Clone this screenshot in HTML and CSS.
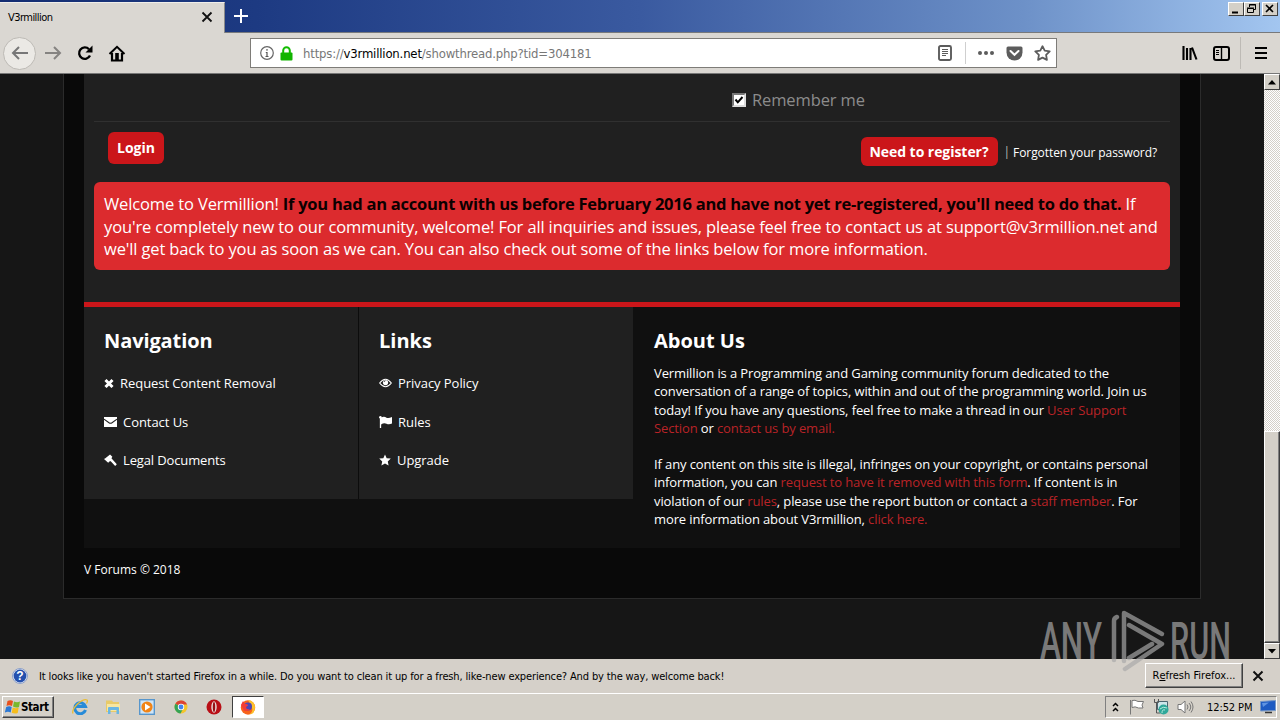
FILE: index.html
```html
<!DOCTYPE html>
<html lang="en">
<head>
<meta charset="utf-8">
<title>V3rmillion</title>
<link rel="stylesheet" href="styles.css">
</head>
<body>
<header class="tabbar">
  <div class="tab"><span class="tab-title">V3rmillion</span>
    <svg width="12" height="12" viewBox="0 0 12 12"><path d="M1.500 1.500l9 9M10.500 1.500l-9 9" stroke="#111" stroke-width="1.800"/></svg>
  </div>
  <svg class="newtab" width="16" height="16" viewBox="0 0 16 16"><path d="M8 1v14M1 8h14" stroke="#fff" stroke-width="2"/></svg>
  <div class="winbtns">
    <span class="wb"><svg width="14" height="12"><path d="M3 9.500h6" stroke="#000" stroke-width="2"/></svg></span>
    <span class="wb"><svg width="14" height="12"><path d="M4.500 4V1.500h6v5h-2M4 2h7M2.500 5.500h6v4h-6zM2 5h7" stroke="#000" fill="none"/></svg></span>
    <span class="wb wb-close"><svg width="14" height="12"><path d="M3 2l7 7M10 2L3 9" stroke="#000" stroke-width="1.600"/></svg></span>
  </div>
</header>
<nav class="toolbar">
  <span class="back"><svg width="18" height="16" viewBox="0 0 18 16"><path d="M17 8H2M8 2L2 8l6 6" stroke="#777" stroke-width="2" fill="none"/></svg></span>
  <svg class="fwd" width="18" height="16" viewBox="0 0 18 16"><path d="M1 8h14M10 2l6 6-6 6" stroke="#858381" stroke-width="2" fill="none"/></svg>
  <svg class="reload" width="16" height="16" viewBox="0 0 16 16"><path d="M13 10.500A5.700 5.700 0 1 1 12 4.200" stroke="#000" stroke-width="2.300" fill="none"/><path d="M15.500 0.500v7h-7z"/></svg>
  <svg class="home" width="18" height="17" viewBox="0 0 18 17"><path d="M1.500 9L9 1.800 16.500 9" stroke="#000" stroke-width="2" fill="none"/><path d="M4 8v7.500h10V8" stroke="#000" stroke-width="2.200" fill="none"/><path d="M7.200 8h3.600v8H7.200z"/></svg>
  <div class="urlbar">
    <svg class="info" width="14" height="14" viewBox="0 0 14 14"><circle cx="7" cy="7" r="6.300" fill="none" stroke="#666" stroke-width="1.200"/><path d="M7 3v1.700M7 6v5M5.800 6.500H7M5.500 10.500h3" stroke="#555" stroke-width="1.200"/></svg>
    <svg class="lock" width="13" height="15" viewBox="0 0 13 15"><path d="M3.200 7V4.500a3.300 3.300 0 0 1 6.600 0V7" fill="none" stroke="#12bc00" stroke-width="2"/><rect x="0.500" y="6.500" width="12" height="8" rx="1" fill="#12b400"/></svg>
    <span class="url">https://<b>v3rmillion.net</b>/showthread.php?tid=304181</span>
    <svg class="reader" width="14" height="16" viewBox="0 0 14 16"><rect x="1" y="1" width="12" height="14" rx="1.500" fill="none" stroke="#5c5c5c" stroke-width="1.900"/><path d="M4 4.500h6M4 6.500h6M4 8.500h6M4 10.500h4" stroke="#5c5c5c"/></svg>
    <i class="usep"></i>
    <svg class="dots" width="18" height="6" viewBox="0 0 18 6"><circle cx="3" cy="3" r="2"/><circle cx="9" cy="3" r="2"/><circle cx="15" cy="3" r="2"/></svg>
    <svg class="pocket" width="17" height="15" viewBox="0 0 17 15"><path d="M2 .5h13q1.500 0 1.500 1.500v4.500a8 8 0 0 1-16 0V2Q.5.500 2 .5z" fill="#5c5c5c"/><path d="M4.500 5l4 3.800 4-3.800" stroke="#fff" stroke-width="2" fill="none" stroke-linecap="round"/></svg>
    <svg class="star" width="17" height="16" viewBox="0 0 17 16"><path d="M8.500 1.200l2.200 4.500 5 .7-3.600 3.500.8 5-4.400-2.300-4.400 2.300.8-5L1.300 6.400l5-.7z" fill="none" stroke="#5c5c5c" stroke-width="1.800" stroke-linejoin="round"/></svg>
  </div>
  <svg class="lib" width="16" height="14" viewBox="0 0 16 14"><path d="M1.500 0v14M5 2v12M8.500 2v12M10 1.500L14.500 13.500" stroke="#000" stroke-width="2.100"/></svg>
  <svg class="side" width="17" height="15" viewBox="0 0 17 15"><rect x="1" y="1" width="15" height="13" rx="2" fill="none" stroke="#000" stroke-width="2"/><path d="M8.500 1v13" stroke="#000" stroke-width="1.400"/><path d="M3 4.500h3M3 6.500h3M3 8.500h3" stroke="#000"/></svg>
  <i class="tsep"></i>
  <svg class="menu" width="12" height="12" viewBox="0 0 12 12"><path d="M0 1h12M0 6h12M0 11h12" stroke="#000" stroke-width="2"/></svg>
</nav>
<main class="view">
  <div class="page">
    <div class="wrap">
      <section class="panel">
        <div class="remember"><span class="check"><svg width="10" height="10" viewBox="0 0 10 10"><path d="M1.500 4.500l2.300 2.800L8.500 2" stroke="#000" stroke-width="2" fill="none"/></svg></span><span class="rem-text">Remember me</span></div>
        <div class="actions">
          <span class="btn login">Login</span>
          <div class="right"><span class="btn register">Need to register?</span><span class="bar">|</span><span class="forgot">Forgotten your password?</span></div>
        </div>
        <div class="alert">
          <div class="ln">Welcome to Vermillion! <b>If you had an account with us before February 2016 and have not yet re-registered, you'll need to do that.</b> If</div>
          <div class="ln">you're completely new to our community, welcome! For all inquiries and issues, please feel free to contact us at support@v3rmillion.net and</div>
          <div class="ln">we'll get back to you as soon as we can. You can also check out some of the links below for more information.</div>
        </div>
      </section>
      <footer class="foot">
        <div class="col">
          <h2 class="h-nav">Navigation</h2>
          <div class="item"><svg width="10" height="10" viewBox="0 0 10 10"><path d="M1.500 2l7 7M8.500 2l-7 7" stroke="#fff" stroke-width="3"/></svg><span>Request Content Removal</span></div>
          <div class="item"><svg width="13" height="10" viewBox="0 0 13 10"><path d="M0 0h13v10H0z" fill="#fff"/><path d="M0 2.200l5 3.500q1.500 1 3 0l5-3.500" stroke="#202020" stroke-width="1.100" fill="none"/></svg><span>Contact Us</span></div>
          <div class="item legal"><svg width="13" height="13" viewBox="0 0 14 13"><path d="M6.500 0L9 2.500 8 4l1.200 1.500L13.800 10.500 12 12.500 7.500 7.500 6.500 7 4.500 9 0 4.800 1.500 4z" fill="#fff"/></svg><span>Legal Documents</span></div>
        </div>
        <div class="col col2">
          <h2>Links</h2>
          <div class="item"><svg width="13" height="10" viewBox="0 0 14 10"><path d="M.7 5Q7-3 13.300 5 7 13 .7 5z" fill="none" stroke="#fff" stroke-width="1.200"/><circle cx="7" cy="4.500" r="2.800" fill="#fff"/><path d="M5.500 4q0-1.500 1.500-1.500" stroke="#202020" stroke-width=".8" fill="none"/></svg><span>Privacy Policy</span></div>
          <div class="item"><svg width="13" height="12" viewBox="0 0 13 12"><path d="M1.500 1v11" stroke="#fff" stroke-width="1.300"/><circle cx="1.400" cy="1.300" r="1.300" fill="#fff"/><path d="M2 1.700q3-1.700 5.500 0 2 1 5.500-.7v6.500q-3 1.500-5.500.2Q5 6.500 2 8.500z" fill="#fff"/></svg><span>Rules</span></div>
          <div class="item"><svg width="12" height="12" viewBox="0 0 13 12"><path d="M6.500 0l1.800 4 4.500.5-3.300 3 .9 4.500-3.900-2.300L2.600 12l.9-4.500-3.300-3L4.700 4z" fill="#fff"/></svg><span>Upgrade</span></div>
        </div>
        <div class="about">
          <h2>About Us</h2>
          <div class="ln">Vermillion is a Programming and Gaming community forum dedicated to the</div>
          <div class="ln">conversation of a range of topics, within and out of the programming world. Join us</div>
          <div class="ln">today! If you have any questions, feel free to make a thread in our <a>User Support</a></div>
          <div class="ln"><a>Section</a> or <a>contact us by email.</a></div>
          <div class="ln gap">If any content on this site is illegal, infringes on your copyright, or contains personal</div>
          <div class="ln">information, you can <a>request to have it removed with this form</a>. If content is in</div>
          <div class="ln">violation of our <a>rules</a>, please use the report button or contact a <a>staff member</a>. For</div>
          <div class="ln">more information about V3rmillion, <a>click here.</a></div>
        </div>
      </footer>
      <div class="copy">V Forums © 2018</div>
    </div>
  </div>
  <div class="scroll">
    <span class="sb"><svg width="8" height="5"><path d="M4 0l4 4.500H0z"/></svg></span>
    <span class="track"></span>
    <span class="thumb"></span>
    <span class="sb"><svg width="8" height="5"><path d="M4 4.500L0 0h8z"/></svg></span>
  </div>
</main>
<div class="notice">
  <svg width="16" height="16" viewBox="0 0 16 16"><circle cx="8" cy="8" r="7.500" fill="#e4e9f4" stroke="#8da0c8"/><circle cx="8" cy="8" r="6.400" fill="#2450ae"/><text x="8" y="12.300" text-anchor="middle" class="q">?</text></svg>
  <span class="msg">It looks like you haven't started Firefox in a while. Do you want to clean it up for a fresh, like-new experience? And by the way, welcome back!</span>
  <span class="refresh">R<u>e</u>fresh Firefox...</span>
  <svg class="nx" width="12" height="12" viewBox="0 0 12 12"><path d="M1.500 1.500l9 9M10.500 1.500l-9 9" stroke="#111" stroke-width="2"/></svg>
</div>
<div class="taskbar">
  <span class="start"><svg width="16" height="16" viewBox="0 0 16 16"><path d="M2.500 2q3-1.500 5.500 0L7 7Q4 5.500 1.500 7z" fill="#e8501c"/><path d="M9 2.500q3 1.500 6 0L14 8q-3 1.300-6-.5z" fill="#79b82c"/><path d="M1.200 8q3-1.500 5.500 0l-1 5.500Q3 12-.2 13.500z" fill="#2b78d4"/><path d="M7.700 8.500q3 1.500 6 0l-1 5.500q-3 1.200-6-.3z" fill="#f6bd1c"/></svg><b>Start</b></span>
  <svg class="ql" width="16" height="16" viewBox="0 0 16 16"><path d="M13.500 11A5.500 5.500 0 1 1 13.500 7.500H4.500" fill="none" stroke="#278bd8" stroke-width="3"/><path d="M1 14.500Q-.5 11 5.500 5 12-.5 15 1q1 1-.5 3.500" fill="none" stroke="#e9bd35" stroke-width="1.300"/></svg>
  <svg class="ql" width="16" height="16" viewBox="0 0 16 16"><path d="M1 3V1.500h6L8 3h6v10H1z" fill="#e8ca68"/><path d="M2 5h13v7H2z" fill="#f7e6a0"/><path d="M3 15V9q0-1 1-1h9q1 0 1 1v6h-2.500v-4h-6v4z" fill="#69b6e3"/></svg>
  <svg class="ql" width="16" height="16" viewBox="0 0 16 16"><rect x=".7" y=".7" width="14.600" height="14.600" fill="#cfe5f7" stroke="#5796cc" stroke-width="1.400"/><circle cx="8" cy="8" r="5.600" fill="#f18416"/><path d="M6 4.500v7L11.500 8z" fill="#fff"/></svg>
  <svg class="ql" width="16" height="16" viewBox="0 0 16 16"><circle cx="8" cy="8" r="6.500" fill="#f4c52c"/><path d="M8 8L2.400 4.700A6.500 6.500 0 0 1 14 5.500H8z" fill="#dc4335"/><path d="M8 8L2.400 4.700A6.500 6.500 0 0 0 7.500 14.500L10.500 9z" fill="#35a355"/><circle cx="8" cy="8" r="3.200" fill="#fff"/><circle cx="8" cy="8" r="2.400" fill="#4384ed"/></svg>
  <svg class="ql" width="16" height="16" viewBox="0 0 16 16"><circle cx="8" cy="8" r="7.500" fill="#b90f16"/><ellipse cx="8" cy="8" rx="2.700" ry="5.800" fill="#e9dcda"/><ellipse cx="8" cy="8" rx="1.200" ry="5" fill="#971015"/></svg>
  <span class="active"><svg width="16" height="16" viewBox="0 0 16 16"><circle cx="8" cy="8.500" r="7.200" fill="#f7631b"/><path d="M8 1q7 1 7 7.500T9 15.500q5-3 2.500-8Q10 5 8 1z" fill="#fdc12b"/><circle cx="8" cy="7.500" r="4" fill="#4b46b5"/><path d="M1 6l2-4 2 3q3-.5 3 1.500L6 8q0 3 4 2-2 3-6 1.500z" fill="#f13c38"/></svg></span>
  <div class="tray">
    <svg class="chev" width="7" height="10" viewBox="0 0 7 10"><path d="M1 4l2.500-2.500L6 4M1 9l2.500-2.500L6 9" fill="none" stroke="#000" stroke-width="1.500"/></svg>
    <svg class="flag" width="16" height="16" viewBox="0 0 16 16"><path d="M1.500 1v14.500M3 1.500q3-1 6 1h5.500L13 6l1 3H9.500Q6 7 3 8.500z" fill="#fff" stroke="#777"/></svg>
    <svg class="net" width="16" height="16" viewBox="0 0 16 16"><path d="M4.500 2.500h10v8h-10z" fill="#cde6ea" stroke="#4b6570"/><path d="M1.500 0v3.500h4V0M3.500 4v10h4" fill="none" stroke="#555"/><circle cx="10.500" cy="10.500" r="5" fill="#2fa89a"/><path d="M7 10q3-3 7-1M9 14q0-4 3-3" stroke="#b6eadb" fill="none"/></svg>
    <svg class="vol" width="17" height="16" viewBox="0 0 17 16"><path d="M1 5.500h3L8 2v12l-4-3.500H1z" fill="#fff" stroke="#777"/><path d="M10 5.500q2 2.500 0 5M12 4q3.500 4 0 8M14 2.500q4 5.500 0 11" fill="none" stroke="#777"/></svg>
    <span class="clock">12:52 PM</span>
    <svg class="desk" width="16" height="14" viewBox="0 0 16 14"><path d="M.5 1.500l15-1v10l-15 .5z" fill="#1e5bc2" stroke="#7798c6"/><path d="M2 3l7-.5L3 7z" fill="#5f94e2"/><path d="M5 12.500h7" stroke="#333" stroke-width="1.500"/></svg>
  </div>
</div>
<svg class="mark" width="220" height="74" viewBox="0 0 220 74">
  <text x="8" y="52" textLength="62" lengthAdjust="spacingAndGlyphs" class="mk">ANY</text>
  <text x="138" y="52" textLength="61" lengthAdjust="spacingAndGlyphs" class="mk">RUN</text>
  <g fill="none" stroke="#a9a9a9" stroke-width="4.500" stroke-linejoin="round" stroke-linecap="round"><path d="M82 53V14q0-3 3-4"/><path d="M92 54V6L130 27"/><path d="M97 18l33 19-37 25M97 51l23-14"/></g>
</svg>
</body>
</html>
```

FILE: styles.css
```css
* { box-sizing: border-box; }
html, body { margin: 0; height: 720px; overflow: hidden; }
body { position: relative; width: 1280px; display: flex; flex-direction: column; background: #d4d0c8; font-family: "Open Sans", sans-serif; color: #fff; }
svg { display: block; flex: none; }
i { display: block; flex: none; }

.tabbar { height: 33px; flex: none; display: flex; align-items: flex-start; background: linear-gradient(90deg, #142d72 0, #1d3a82 20%, #3a5aa0 50%, #6d91c8 80%, #a3c6f0 100%); border-bottom: 1px solid #77797c; }
.tab { width: 225px; height: 33px; margin-top: 2px; padding: 0 11px 4px 8px; display: flex; align-items: center; justify-content: space-between; background: #dad7d2; border-right: 1px solid #8a8a8a; border-top: 1px solid #f0eeea; }
.tab-title, .msg, .refresh, .clock, .url, .start { font-family: "DejaVu Sans Condensed", "DejaVu Sans", sans-serif; color: #000; white-space: nowrap; }
.tab-title { font-size: 11px; letter-spacing: -0.55px; }
.newtab { margin: 8px 0 0 8px; }
.winbtns { margin: 2px 2px 0 auto; display: flex; }
.wb { width: 16px; height: 14px; background: #d4d0c8; border: 1px solid; border-color: #fff #404040 #404040 #fff; overflow: hidden; }
.wb-close { margin-left: 2px; }

.toolbar { height: 41px; flex: none; display: flex; align-items: center; background: #dad7d2; border-bottom: 1px solid #777; }
.back { width: 33px; height: 33px; margin-left: 3px; border-radius: 50%; border: 1px solid #bdbab5; background: #ebe9e5; display: flex; align-items: center; justify-content: center; }
.fwd { margin-left: 8px; }
.reload { margin-left: 15px; }
.home { margin-left: 15px; }
.urlbar { width: 807px; height: 30px; margin-left: 124px; background: #fff; border: 1px solid #7e7c78; display: flex; align-items: center; }
.info { margin-left: 9px; }
.lock { margin-left: 6px; }
.url { margin-left: 10px; width: 600px; font-size: 13px; letter-spacing: -0.18px; color: #777; }
.url b { font-weight: 400; color: #000; }
.reader { margin-left: 35px; }
.usep { width: 1px; height: 22px; margin-left: 13px; background: #cfcfcf; }
.dots { margin-left: 11px; fill: #5c5c5c; }
.pocket { margin-left: 11px; }
.star { margin-left: 11px; }
.lib { margin-left: 125px; }
.side { margin-left: 15px; }
.tsep { width: 1px; height: 32px; margin-left: 10px; background: #bdbab5; }
.menu { margin-left: 14px; }

.view { height: 585px; flex: none; display: flex; background: #161616; }
.page { width: 1264px; padding-left: 63px; }
.wrap { width: 1138px; height: 525px; padding: 0 20px; background: #090909; border: 1px solid #2b2b2b; border-top: 0; }
.panel { height: 228px; padding: 0 10px; background: #202020; }
.remember { height: 48px; padding: 4px 0 0 638px; border-bottom: 1px solid #303030; display: flex; align-items: center; }
.check { width: 14px; height: 14px; margin-right: 6px; background: #fff; border: 2px solid; border-color: #777 #ddd #ddd #777; }
.rem-text { font-size: 16.500px; letter-spacing: -0.12px; color: #8c8c8c; white-space: nowrap; }
.actions { height: 60px; padding: 10px 13px 0 14px; display: flex; justify-content: space-between; }
.btn { background: #cb161a; border-radius: 6px; font-weight: 700; font-size: 14px; display: flex; align-items: center; justify-content: center; white-space: nowrap; }
.login { width: 56px; height: 32px; padding-bottom: 2px; }
.right { display: flex; align-items: center; height: 29px; margin-top: 5px; }
.register { width: 137px; height: 29px; letter-spacing: -0.05px; }
.bar { margin-left: 6px; font-size: 12px; color: #bbb; }
.forgot { margin-left: 3px; padding-top: 2px; font-size: 12px; letter-spacing: -0.08px; white-space: nowrap; }
.alert { height: 88px; padding: 11px 10px; background: #dc2b2e; border-radius: 6px; font-size: 16.500px; letter-spacing: -0.135px; }
.ln { white-space: nowrap; }
.alert .ln { line-height: 22.700px; }
.alert b { color: #0c0000; letter-spacing: -0.25px; }
.foot { height: 246px; border-top: 5px solid #cb161a; display: flex; align-items: flex-start; background: #101010; }
.col { width: 275px; height: 192px; padding: 20px; background: #202020; border-right: 1px solid #0c0c0c; }
.col2 { width: 274px; border: 0; }
h2 { margin: 0; font-size: 20px; line-height: 27px; font-weight: 700; white-space: nowrap; }
.h-nav { letter-spacing: -0.1px; }
.item { height: 38.500px; display: flex; align-items: center; font-size: 13px; letter-spacing: -0.05px; white-space: nowrap; }
.legal { letter-spacing: -0.13px; }
h2 + .item { margin-top: 10px; }
.item svg { margin-right: 6px; }
.about { padding: 20px 0 0 21px; font-size: 13px; letter-spacing: -0.115px; }
.about h2 { letter-spacing: 0; }
.about .ln { line-height: 18.300px; }
h2 + .ln { margin-top: 10px; }
.about .gap { margin-top: 18px; }
a { color: #b92327; }
.copy { margin-top: 13px; font-size: 12px; line-height: 17px; }

.scroll { width: 16px; display: flex; flex-direction: column; background: #d4d0c8; }
.sb { width: 16px; height: 16px; flex: none; display: flex; align-items: center; justify-content: center; background: #d4d0c8; border: 1px solid; border-color: #fff #404040 #404040 #fff; }
.track { height: 341px; background: repeating-conic-gradient(#fff 0 25%, #d4d0c8 0 50%) 0 0 / 2px 2px; }
.thumb { flex: 1; border: 1px solid; border-color: #fff #404040 #404040 #fff; box-shadow: inset -1px -1px #808080; }

.notice { height: 35px; flex: none; padding-left: 12px; display: flex; align-items: center; background: #d5d0c9; border-bottom: 1px solid #fff; }
.q { font: bold 12px "Liberation Sans", sans-serif; fill: #fff; }
.msg { margin-left: 11px; width: 1106px; font-size: 11px; letter-spacing: -0.137px; }
.refresh { width: 98px; height: 25px; margin-top: -2px; flex: none; font-size: 11px; display: flex; align-items: center; justify-content: center; border: 1px solid; border-color: #fff #404040 #404040 #fff; box-shadow: inset -1px -1px #808080; }
.nx { margin-left: 9px; }

.taskbar { height: 26px; flex: none; padding: 0 3px 0 2px; display: flex; align-items: center; background: #d4d0c8; }
.start { width: 52px; height: 22px; padding-left: 2px; display: flex; align-items: center; border: 1px solid; border-color: #fff #404040 #404040 #fff; box-shadow: inset -1px -1px #808080; font-size: 11.500px; }
.start b { letter-spacing: -0.4px; }
.ql { margin-left: 17.700px; }
.active { width: 32px; height: 22px; margin-left: 10px; background: #fff; border: 1px solid; border-color: #404040 #fff #fff #404040; display: flex; align-items: center; justify-content: center; }
.tray { width: 172px; height: 22px; margin-left: auto; padding-left: 6px; display: flex; align-items: center; border: 1px solid; border-color: #808080 #fff #fff #808080; }
.flag { margin-left: 10px; }
.net { margin-left: 8px; }
.vol { margin-left: 8px; }
.clock { margin-left: 13px; width: 45px; font-size: 11px; letter-spacing: -0.1px; }
.desk { margin-left: 8px; }

.mark { position: absolute; left: 1032px; top: 607px; opacity: .68; }
.mk { font: 500 51px Roboto, sans-serif; fill: #a9a9a9; }
```
